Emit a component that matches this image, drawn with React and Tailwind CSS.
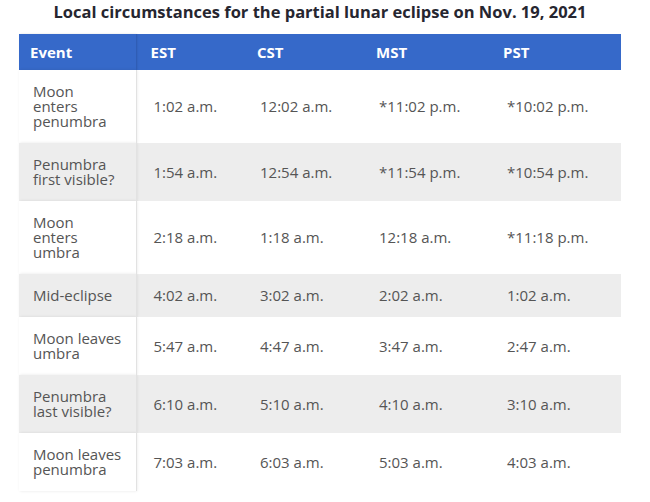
const rows = [
  { lines: ['Moon', 'enters', 'penumbra'], est: '1:02 a.m.', cst: '12:02 a.m.', mst: '*11:02 p.m.', pst: '*10:02 p.m.' },
  { lines: ['Penumbra', 'first visible?'], est: '1:54 a.m.', cst: '12:54 a.m.', mst: '*11:54 p.m.', pst: '*10:54 p.m.' },
  { lines: ['Moon', 'enters', 'umbra'], est: '2:18 a.m.', cst: '1:18 a.m.', mst: '12:18 a.m.', pst: '*11:18 p.m.' },
  { lines: ['Mid-eclipse'], est: '4:02 a.m.', cst: '3:02 a.m.', mst: '2:02 a.m.', pst: '1:02 a.m.' },
  { lines: ['Moon leaves', 'umbra'], est: '5:47 a.m.', cst: '4:47 a.m.', mst: '3:47 a.m.', pst: '2:47 a.m.' },
  { lines: ['Penumbra', 'last visible?'], est: '6:10 a.m.', cst: '5:10 a.m.', mst: '4:10 a.m.', pst: '3:10 a.m.' },
  { lines: ['Moon leaves', 'penumbra'], est: '7:03 a.m.', cst: '6:03 a.m.', mst: '5:03 a.m.', pst: '4:03 a.m.' },
];

const App = () => {
  return (
    <div className="w-[650px] h-[502px] bg-white font-['Open_Sans',sans-serif] overflow-hidden">
      <div className="w-[602px] ml-[19px] pt-[1px]">
        <h1 className="text-center text-[16.5px] leading-[22px] font-bold text-[#262630] mb-[11px]">
          Local circumstances for the partial lunar eclipse on Nov. 19, 2021
        </h1>
        <table className="w-[602px] table-fixed border-collapse text-left">
          <colgroup>
            <col className="w-[117px]" />
            <col className="w-[107px]" />
            <col className="w-[119px]" />
            <col className="w-[128px]" />
            <col className="w-[131px]" />
          </colgroup>
          <thead>
            <tr className="bg-[#3669c9] text-white text-[15px] h-[36px]">
              <th className="pl-[11px] font-bold border-r border-[#2f5db5] shadow-[1px_0_2px_rgba(0,0,0,0.12)]">Event</th>
              <th className="pl-[14px] font-bold">EST</th>
              <th className="pl-[14px] font-bold">CST</th>
              <th className="pl-[14px] font-bold">MST</th>
              <th className="pl-[13px] font-bold">PST</th>
            </tr>
          </thead>
          <tbody>
            {rows.map((r, i) => (
              <tr key={i} className={`text-[15px] leading-[15px] text-[#555] ${i % 2 === 1 ? 'bg-[#ededed]' : 'bg-white'}`}>
                <td className="pl-[14px] pr-[4px] py-[14px] align-middle border-r border-[#e2e2e2] shadow-[1px_0_3px_rgba(0,0,0,0.10)]">
                  {r.lines.map((l, j) => (
                    <div key={j} className="whitespace-nowrap">{l}</div>
                  ))}
                </td>
                <td className="pl-[17px] align-middle">{r.est}</td>
                <td className="pl-[17px] align-middle">{r.cst}</td>
                <td className="pl-[17px] align-middle">{r.mst}</td>
                <td className="pl-[17px] align-middle">{r.pst}</td>
              </tr>
            ))}
          </tbody>
        </table>
      </div>
    </div>
  );
};

export default App;
